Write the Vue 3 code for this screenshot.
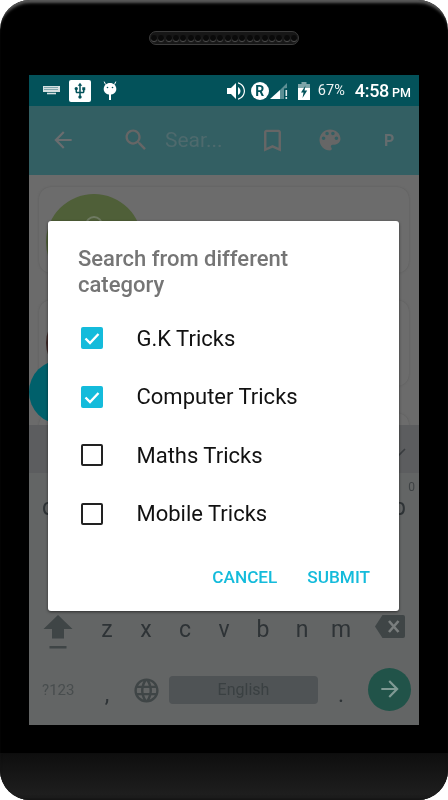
<script setup>
	import { ref } from 'vue';

	const categories = ref([
		{ name: 'G.K Tricks', checked: true },
		{ name: 'Computer Tricks', checked: true },
		{ name: 'Maths Tricks', checked: false },
		{ name: 'Mobile Tricks', checked: false },
	]);
	const toggle = (item) => {
		item.checked = !item.checked;
	};

	const holes = Array.from({ length: 20 });
	const bottomKeys = ['z', 'x', 'c', 'v', 'b', 'n', 'm'];
</script>

<template>
	<div class="phone">
		<header class="bezel-top">
			<div class="speaker">
				<span v-for="(h, i) in holes" :key="i" class="hole"></span>
			</div>
		</header>

		<main class="screen">
			<div class="status">
				<div class="status-left">
					<svg class="ic-keyboard" width="17" height="9" viewBox="0 0 17 9">
						<path d="M0 0h17v6H0z" fill="#d5e0e1" />
						<path d="M1.500 1.500h14M1.500 3.500h14" stroke="#03525a" stroke-width=".8" stroke-dasharray="1 1" />
						<path d="M4 7.500h9" stroke="#d5e0e1" stroke-width="1.600" />
					</svg>
					<span class="usb-box">
						<svg width="18" height="18" viewBox="0 0 24 24">
							<path fill="#03525a" d="M15 7v4h1v2h-3V5h2l-3-4-3 4h2v8H8v-2.070c.7-.37 1.200-1.080 1.200-1.930 0-1.210-.99-2.200-2.200-2.200-1.210 0-2.200.99-2.200 2.200 0 .85.5 1.560 1.200 1.930V13c0 1.110.89 2 2 2h3v3.050c-.71.37-1.200 1.100-1.200 1.950 0 1.220.99 2.200 2.200 2.200 1.210 0 2.200-.98 2.200-2.200 0-.85-.49-1.580-1.200-1.950V15h3c1.110 0 2-.89 2-2v-2h1V7h-4z" />
						</svg>
					</span>
					<svg class="ic-android" width="14" height="19" viewBox="0 0 14 19">
						<path d="M2.500 3.500 1.200.6M11.500 3.500 12.800.6" stroke="#fff" stroke-width="1" />
						<path fill="#fff" d="M7 2c3.600 0 6.300 2.600 6.300 6s-2.700 5.600-6.300 5.600S.7 11.400.7 8 3.400 2 7 2z" />
						<circle cx="4.500" cy="6.500" r=".8" fill="#03525a" />
						<circle cx="9.500" cy="6.500" r=".8" fill="#03525a" />
						<path d="M7 13v6" stroke="#fff" stroke-width="2" />
					</svg>
				</div>
				<div class="status-right">
					<svg class="ic-volume" width="20" height="20" viewBox="2 2 20 20">
						<path fill="#fff" d="M3 9v6h4l5 5V4L7 9H3zm13.500 3c0-1.770-1.020-3.290-2.500-4.030v8.050c1.480-.73 2.500-2.250 2.500-4.020zM14 3.230v1.300c3.200.86 5.800 3.800 5.800 7.470s-2.600 6.610-5.800 7.470v1.300c4.010-.91 7-4.490 7-8.770s-2.990-7.860-7-8.770z" />
					</svg>
					<span class="roaming">R</span>
					<svg class="ic-signal" width="18" height="17" viewBox="0 0 18 17">
						<path fill="#fff" d="M0 17 10 8v9z" />
						<path fill="#5d8f94" d="M10 8l7-7v5l-3 .5V17h-4z" />
						<path fill="#dfe9ea" d="M15.500 8h1.600v6h-1.600zM15.500 15h1.600v2h-1.600z" />
					</svg>
					<svg class="ic-battery" width="12" height="18" viewBox="0 0 12 18">
						<path fill="#7ea5a9" d="M3.500 0h5v2h3.500v5H0V2h3.500z" />
						<path fill="#fff" d="M0 6h12v12H0z" />
						<path fill="#03525a" d="M7.500 3.500 3 10.500h2.500l-1 5.500L9.200 8.500H6.500z" />
					</svg>
					<span class="battery-text">67%</span>
					<span class="clock">4:58</span>
					<span class="ampm">PM</span>
				</div>
			</div>

			<div class="toolbar">
				<svg class="ic-back" width="26" height="26" viewBox="0 0 24 24">
					<path fill="#6a6d6f" d="M20 11H7.830l5.590-5.590L12 4l-8 8 8 8 1.410-1.410L7.830 13H20v-2z" />
				</svg>
				<svg class="ic-search" width="28" height="28" viewBox="0 0 24 24">
					<path fill="#666" d="M15.500 14h-.79l-.28-.27C15.410 12.590 16 11.110 16 9.500 16 5.910 13.090 3 9.500 3S3 5.910 3 9.500 5.910 16 9.500 16c1.610 0 3.090-.59 4.230-1.570l.27.28v.79l5 4.990L20.490 19l-4.990-5zm-6 0C7.010 14 5 11.990 5 9.500S7.010 5 9.500 5 14 7.010 14 9.500 11.990 14 9.500 14z" />
				</svg>
				<span class="search-text">Sear...</span>
				<svg class="ic-bookmark" width="29" height="29" viewBox="0 0 24 24">
					<path fill="#666" d="M17 3H7c-1.100 0-1.990.9-1.990 2L5 21l7-3 7 3V5c0-1.100-.9-2-2-2zm0 15l-5-2.180L7 18V5h10v13z" />
				</svg>
				<svg class="ic-palette" width="28" height="28" viewBox="0 0 24 24">
					<path fill="#666" d="M12 3c-4.970 0-9 4.030-9 9s4.030 9 9 9c.83 0 1.500-.67 1.500-1.500 0-.39-.15-.74-.39-1.010-.23-.26-.38-.61-.38-.99 0-.83.67-1.500 1.500-1.500H16c2.760 0 5-2.240 5-5 0-4.420-4.030-8-9-8zm-5.500 9c-.83 0-1.500-.67-1.500-1.500S5.670 9 6.500 9 8 9.670 8 10.500 7.330 12 6.500 12zm3-4C8.670 8 8 7.330 8 6.500S8.670 5 9.500 5s1.500.67 1.500 1.500S10.330 8 9.500 8zm5 0c-.83 0-1.500-.67-1.500-1.500S13.670 5 14.500 5s1.500.67 1.500 1.500S15.330 8 14.500 8zm3 4c-.83 0-1.500-.67-1.500-1.500S16.670 9 17.500 9s1.500.67 1.500 1.500-.67 1.500-1.500 1.500z" />
				</svg>
				<span class="profile">P</span>
			</div>

			<div class="content">
				<div class="card">
					<div class="thumb thumb-green"><span class="thumb-ring"></span></div>
				</div>
				<div class="card">
					<div class="thumb thumb-red"></div>
				</div>
				<div class="card"></div>
				<div class="fab"></div>
			</div>

			<div class="keyboard">
				<div class="strip">
					<svg width="16" height="10" viewBox="0 0 16 10">
						<path d="M1 1l7 7 7-7" fill="none" stroke="#3a3d40" stroke-width="1.600" />
					</svg>
				</div>
				<div class="row row-top">
					<span class="key">q</span>
					<span class="key"><small class="hint">0</small>p</span>
				</div>
				<div class="row row-mid"></div>
				<div class="row row-low">
					<span class="side-key">
						<svg width="30" height="34" viewBox="0 0 30 34">
							<path fill="#3f4546" d="M15 0 29.500 14H21v9.500H9V14H.5z" />
							<path fill="#3f4546" d="M6.500 31h17v2.500h-17z" />
						</svg>
					</span>
					<span v-for="k in bottomKeys" :key="k" class="key">{{ k }}</span>
					<span class="side-key">
						<svg width="30" height="23" viewBox="0 0 30 23">
							<path fill="#3f4546" d="M7.500 0H28a2 2 0 0 1 2 2v19a2 2 0 0 1-2 2H7.500L0 11.500z" />
							<path d="M14 6l9.500 11M23.500 6 14 17" stroke="#7a7e7e" stroke-width="2.600" />
						</svg>
					</span>
				</div>
				<div class="row row-bottom">
					<span class="side-key sym">?123</span>
					<span class="key comma">,</span>
					<span class="key">
						<svg width="29" height="29" viewBox="0 0 24 24">
							<path fill="#3f4546" d="M11.990 2C6.470 2 2 6.480 2 12s4.470 10 9.990 10C17.520 22 22 17.520 22 12S17.520 2 11.990 2zm6.930 6h-2.950c-.32-1.250-.78-2.450-1.380-3.560 1.840.63 3.370 1.910 4.330 3.560zM12 4.040c.83 1.200 1.480 2.530 1.910 3.960h-3.820c.43-1.430 1.080-2.760 1.910-3.960zM4.260 14C4.100 13.360 4 12.690 4 12s.1-1.360.26-2h3.380c-.08.66-.14 1.320-.14 2 0 .68.06 1.340.14 2H4.260zm.82 2h2.950c.32 1.250.78 2.450 1.380 3.560-1.840-.63-3.370-1.900-4.330-3.560zm2.950-8H5.080c.96-1.660 2.490-2.930 4.330-3.560C8.810 5.550 8.350 6.750 8.030 8zM12 19.960c-.83-1.200-1.480-2.530-1.910-3.960h3.820c-.43 1.430-1.080 2.760-1.910 3.960zM14.340 14H9.660c-.09-.66-.16-1.320-.16-2 0-.68.07-1.350.16-2h4.680c.09.65.16 1.320.16 2 0 .68-.07 1.340-.16 2zm.25 5.560c.6-1.110 1.060-2.310 1.380-3.560h2.950c-.96 1.650-2.490 2.930-4.330 3.560zM16.360 14c.08-.66.14-1.320.14-2 0-.68-.06-1.340-.14-2h3.380c.16.64.26 1.310.26 2s-.1 1.360-.26 2h-3.380z" />
						</svg>
					</span>
					<span class="space-cell"><span class="space">English</span></span>
					<span class="key period">.</span>
					<span class="side-key">
						<span class="enter">
							<svg width="26" height="26" viewBox="0 0 24 24">
								<path fill="#7f9a94" d="M4 11h12.170l-5.590-5.590L12 4l8 8-8 8-1.410-1.410L16.170 13H4v-2z" />
							</svg>
						</span>
					</span>
				</div>
			</div>

			<div class="overlay">
				<section class="dialog">
					<h2 class="dialog-title">Search from different category</h2>
					<ul class="options">
						<li v-for="item in categories" :key="item.name" class="option" @click="toggle(item)">
							<span class="box" :class="{ on: item.checked }">
								<svg v-if="item.checked" width="22" height="22" viewBox="0 0 22 22">
									<path d="M4.500 11.500 9 16l8.500-9" fill="none" stroke="#fff" stroke-width="2.400" />
								</svg>
							</span>
							<span class="option-name">{{ item.name }}</span>
						</li>
					</ul>
					<div class="actions">
						<button class="action">CANCEL</button>
						<button class="action">SUBMIT</button>
					</div>
				</section>
			</div>
		</main>

		<footer class="bezel-bottom"></footer>
	</div>
</template>

<style scoped>
	* {
		box-sizing: border-box;
		margin: 0;
		padding: 0;
	}
	.phone {
		width: 448px;
		height: 800px;
		display: flex;
		flex-direction: column;
		font-family: Roboto, 'Noto Sans', sans-serif;
		background: #000;
		border-radius: 30px;
		box-shadow: inset 0 5px 3px -2px #5a5a5a;
		overflow: hidden;
	}
	.bezel-top {
		height: 75px;
		flex: none;
		display: flex;
		justify-content: center;
		padding-top: 31px;
	}
	.speaker {
		width: 150px;
		height: 14px;
		display: flex;
		align-items: center;
		justify-content: center;
		gap: 1.4px;
		background: #171717;
		border: 1px solid #3c3c3c;
		border-radius: 7px;
	}
	.hole {
		width: 6px;
		height: 6px;
		flex: none;
		border-radius: 50%;
		background: #0a0a0a;
		box-shadow: 0 1px 1px #555;
	}
	.screen {
		position: relative;
		width: 390px;
		height: 650px;
		flex: none;
		margin-left: 29px;
		display: flex;
		flex-direction: column;
		background: #6b6b6b;
		overflow: hidden;
		filter: blur(0.35px);
	}
	.status {
		height: 31px;
		flex: none;
		display: flex;
		align-items: center;
		justify-content: space-between;
		padding: 0 10px 0 14px;
		color: #fff;
		background: #03525a;
	}
	.status-left,
	.status-right {
		display: flex;
		align-items: center;
	}
	.usb-box {
		width: 22px;
		height: 22px;
		display: flex;
		align-items: center;
		justify-content: center;
		margin-left: 9px;
		background: #fff;
		border-radius: 2px;
	}
	.ic-android {
		margin-left: 12px;
	}
	.roaming {
		width: 18px;
		height: 18px;
		margin-left: 5px;
		border-radius: 50%;
		text-align: center;
		font-size: 14px;
		font-weight: 700;
		line-height: 18px;
		color: #03525a;
		background: #fff;
	}
	.ic-signal {
		margin-left: 1px;
	}
	.ic-battery {
		margin-left: 10px;
	}
	.battery-text {
		margin-left: 8px;
		font-size: 14.5px;
		color: #eef3f3;
	}
	.clock {
		margin-left: 10px;
		font-size: 18px;
		font-weight: 500;
		letter-spacing: -0.3px;
	}
	.ampm {
		width: 17px;
		margin-left: 3px;
		margin-top: 3px;
		font-size: 12.5px;
		font-weight: 500;
		white-space: nowrap;
	}
	.toolbar {
		height: 69px;
		flex: none;
		display: flex;
		align-items: center;
		padding-bottom: 1px;
		color: #51696c;
		background: #335f63;
	}
	.ic-back {
		margin-left: 21px;
	}
	.ic-search {
		margin-left: 46px;
	}
	.search-text {
		width: 91px;
		margin-left: 15px;
		font-size: 21px;
		color: #4e6a6d;
	}
	.ic-bookmark {
		margin-left: 2px;
	}
	.ic-palette {
		margin-left: 29px;
	}
	.profile {
		margin-left: 40px;
		font-size: 16px;
		font-weight: 700;
		color: #646c6e;
	}
	.content {
		position: relative;
		height: 250px;
		flex: none;
		display: flex;
		flex-direction: column;
		gap: 27px;
		padding: 12px 10px 0;
		overflow: hidden;
	}
	.card {
		height: 86px;
		flex: none;
		padding: 7px;
		background: #6c6c6c;
		border-radius: 12px;
		box-shadow: 0 0 2px #5b5b5b;
	}
	.thumb {
		display: flex;
		justify-content: center;
		border-radius: 50%;
	}
	.thumb-green {
		width: 96px;
		height: 96px;
		padding-top: 22px;
		background: #4f5f38;
	}
	.thumb-ring {
		width: 18px;
		height: 18px;
		border: 2px solid #6f7a62;
		border-radius: 50%;
	}
	.thumb-red {
		width: 72px;
		height: 72px;
		background: #3d2726;
	}
	.fab {
		position: absolute;
		left: 0;
		top: 185px;
		width: 64px;
		height: 64px;
		border-radius: 50%;
		background: #00606b;
	}
	.keyboard {
		flex: 1;
		display: flex;
		flex-direction: column;
		color: #2e3336;
		background: #636565;
	}
	.strip {
		height: 48px;
		flex: none;
		display: flex;
		align-items: center;
		justify-content: flex-end;
		padding: 8px 13px 0 0;
		background: #5c5d5f;
	}
	.row {
		display: flex;
		flex: none;
	}
	.row-top {
		height: 61px;
		padding-top: 19px;
		justify-content: space-between;
	}
	.row-mid {
		height: 61px;
	}
	.row-low {
		height: 61px;
		padding-top: 20px;
	}
	.row-bottom {
		height: 69px;
		padding-bottom: 1px;
	}
	.key {
		position: relative;
		width: 39px;
		flex: none;
		display: flex;
		align-items: center;
		justify-content: center;
		font-size: 23px;
	}
	.row-top .key {
		height: 30px;
	}
	.row-low .key {
		height: 30px;
		align-items: flex-start;
		line-height: 30px;
	}
	.hint {
		position: absolute;
		right: 4px;
		top: -12px;
		font-size: 12px;
		color: #3e4244;
	}
	.side-key {
		width: 58.5px;
		flex: none;
		display: flex;
		align-items: flex-start;
		justify-content: center;
	}
	.row-bottom .side-key {
		align-items: center;
	}
	.sym {
		font-size: 15px;
		color: #484d4e;
	}
	.comma,
	.period {
		padding-top: 8px;
	}
	.space-cell {
		width: 156px;
		flex: none;
		display: flex;
		align-items: center;
		justify-content: center;
	}
	.space {
		width: 149px;
		height: 28px;
		display: block;
		text-align: center;
		font-size: 16px;
		line-height: 27px;
		color: #3a4042;
		background: #4f5355;
		border-radius: 4px;
	}
	.enter {
		width: 43px;
		height: 43px;
		display: flex;
		align-items: center;
		justify-content: center;
		margin-bottom: 2px;
		border-radius: 50%;
		background: #215349;
	}
	.overlay {
		position: absolute;
		inset: 0;
		display: flex;
		align-items: flex-start;
		justify-content: center;
		padding: 146px 1px 0 0;
	}
	.dialog {
		width: 351px;
		height: 390px;
		display: flex;
		flex-direction: column;
		padding: 25px 29px 0 30px;
		background: #fff;
		border-radius: 3px;
		box-shadow: 0 1px 3px rgba(0, 0, 0, 0.55);
	}
	.dialog-title {
		max-width: 260px;
		font-size: 22px;
		font-weight: 500;
		line-height: 25.6px;
		color: #757575;
	}
	.options {
		list-style: none;
		margin-top: 12px;
	}
	.option {
		height: 58.4px;
		display: flex;
		align-items: center;
		padding-left: 3px;
	}
	.box {
		width: 22px;
		height: 22px;
		flex: none;
		border: 2px solid #222;
		border-radius: 2px;
	}
	.box.on {
		border: 0;
		background: #14bbdb;
	}
	.option-name {
		margin-left: 33.5px;
		font-size: 22px;
		color: #111;
	}
	.actions {
		display: flex;
		justify-content: flex-end;
		gap: 30px;
		margin-top: 24px;
	}
	.action {
		font-family: inherit;
		font-size: 17.2px;
		font-weight: 500;
		color: #14bbdb;
		background: none;
		border: 0;
	}
	.bezel-bottom {
		flex: 1;
		margin-top: 28px;
		background: linear-gradient(#0e0e0e, #202020);
		box-shadow: inset 0 -2px 3px #141414;
	}
</style>

<style>
	body {
		background: #fff;
	}
</style>
